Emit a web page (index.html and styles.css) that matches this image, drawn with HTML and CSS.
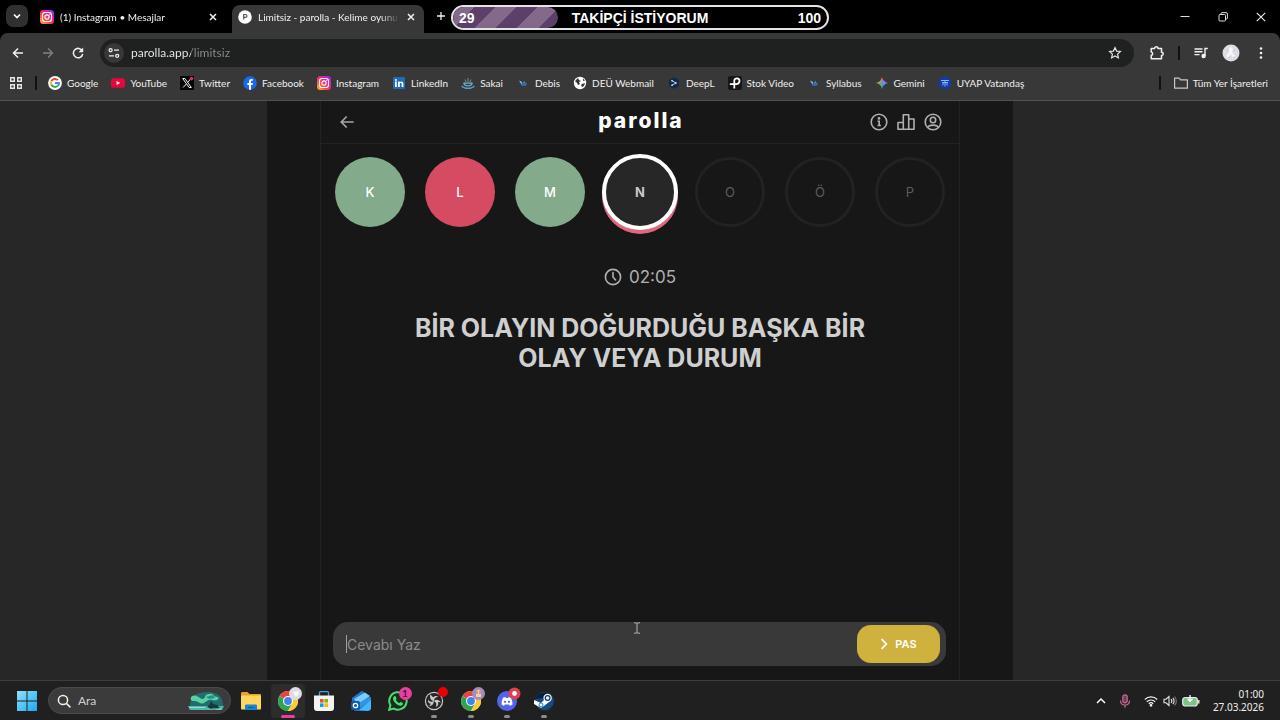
FILE: index.html
```html
<!DOCTYPE html>
<html lang="tr">
<head>
    <meta charset="UTF-8">
    <title>Limitsiz - parolla - Kelime oyunu</title>
    <link rel="stylesheet" href="styles.css">
</head>
<body>
<!-- shared icons -->
<svg class="defs" aria-hidden="true">
    <defs>
        <linearGradient id="igFill" x1="0" y1="1" x2="1" y2="0">
            <stop offset="0" stop-color="#ffc83a"/>
            <stop offset=".35" stop-color="#ff4a3d"/>
            <stop offset=".65" stop-color="#e3209a"/>
            <stop offset="1" stop-color="#8a30f0"/>
        </linearGradient>
        <linearGradient id="winFill" x1="0" y1="0" x2="1" y2="1">
            <stop offset="0" stop-color="#8be4fb"/>
            <stop offset="1" stop-color="#1ea7ee"/>
        </linearGradient>
        <symbol id="instagram" viewBox="0 0 14 14">
            <rect width="14" height="14" rx="3.5" fill="url(#igFill)"/>
            <rect x="2.5" y="2.5" width="9" height="9" rx="2.6" fill="none" stroke="#fff" stroke-width="1.1"/>
            <circle cx="7" cy="7" r="2.1" fill="none" stroke="#fff" stroke-width="1.1"/>
            <circle cx="9.7" cy="4.3" r=".6" fill="#fff"/>
        </symbol>
        <symbol id="close" viewBox="0 0 10 10">
            <path d="M2 2l6 6M8 2L2 8" stroke="#f1f1f1" stroke-width="1.5"/>
        </symbol>
        <symbol id="chrome" viewBox="0 0 20 20">
            <circle cx="10" cy="10" r="10" fill="#fff"/>
            <path d="M10 10L1.34 5A10 10 0 0 1 18.66 5z" fill="#e8453c"/>
            <path d="M1.34 5A10 10 0 0 0 10 20l4.3-7.5L10 10z" fill="#34a351"/>
            <path d="M18.66 5A10 10 0 0 1 10 20l4.3-7.5L10 5z" fill="#fccb2f"/>
            <path d="M10 5h8.66L15 8z" fill="#e8453c"/>
            <circle cx="10" cy="10" r="5" fill="#fff"/>
            <circle cx="10" cy="10" r="3.9" fill="#3f83f0"/>
        </symbol>
        <symbol id="deu" viewBox="0 0 14 14">
            <path d="M3 4.5l3.5 2.8L11 7l-1 2.8H5.5z" fill="#356fb5"/>
            <path d="M3 4.5L6 6l-.5 2z" fill="#9cc6f2"/>
            <path d="M6.5 6.8l2-1.6 1 1.6z" fill="#6fa3da"/>
        </symbol>
    </defs>
</svg>

<header class="browser">
    <div class="tab-strip">
        <button class="tab-search" aria-label="Sekmelerde ara">
            <svg width="10" height="10" viewBox="0 0 10 10"><path d="M2 3.5l3 3 3-3" fill="none" stroke="#fff" stroke-width="1.6"/></svg>
        </button>
        <div class="tab">
            <svg width="14" height="14"><use href="#instagram"/></svg>
            <span class="tab-title">(1) Instagram • Mesajlar</span>
            <button class="tab-close" aria-label="Kapat"><svg width="10" height="10"><use href="#close"/></svg></button>
        </div>
        <div class="tab active">
            <svg width="14" height="14" viewBox="0 0 14 14">
                <circle cx="7" cy="7" r="6.8" fill="#fff"/>
                <path d="M5.7 9.5v-5h1.8a1.4 1.4 0 0 1 0 2.9H5.7" fill="none" stroke="#555" stroke-width="1.2"/>
            </svg>
            <span class="tab-title">Limitsiz - parolla - Kelime oyunu</span>
            <button class="tab-close" aria-label="Kapat"><svg width="10" height="10"><use href="#close"/></svg></button>
        </div>
        <button class="new-tab" aria-label="Yeni sekme">
            <svg width="10" height="10" viewBox="0 0 10 10"><path d="M5 1v8M1 5h8" stroke="#f1f1f1" stroke-width="1.3"/></svg>
        </button>
        <div class="window-controls">
            <button aria-label="Simge durumuna küçült"><svg width="10" height="10" viewBox="0 0 10 10"><path d="M.5 4.5h9" stroke="#ddd"/></svg></button>
            <button aria-label="Önceki boyut"><svg width="10" height="10" viewBox="0 0 10 10" fill="none" stroke="#ddd"><rect x="1" y="2.5" width="6.5" height="6.5" rx="1"/><path d="M3 2.2V1.6c0-.6.4-1 1-1h4c.9 0 1.4.5 1.4 1.4V6c0 .7-.4 1-1 1h-.6"/></svg></button>
            <button aria-label="Pencereyi kapat"><svg width="10" height="10" viewBox="0 0 10 10"><path d="M.8.8l8.4 8.4M9.2.8L.8 9.2" stroke="#eee" stroke-width="1.1"/></svg></button>
        </div>
        <div class="goal">
            <div class="goal-fill" style="width: 28%"></div>
            <span class="goal-now">29</span>
            <span class="goal-title">TAKİPÇİ İSTİYORUM</span>
            <span class="goal-end">100</span>
        </div>
    </div>

    <div class="toolbar">
        <button class="tool" aria-label="Geri"><svg width="12" height="12" viewBox="0 0 12 12" fill="none" stroke="#f1f1f1" stroke-width="1.5"><path d="M11 6H1.8M6 1.5L1.5 6 6 10.5"/></svg></button>
        <button class="tool" aria-label="İleri"><svg width="12" height="12" viewBox="0 0 12 12" fill="none" stroke="#808080" stroke-width="1.3"><path d="M1 6h9.2M6 1.5L10.5 6 6 10.5"/></svg></button>
        <button class="tool" aria-label="Yenile"><svg width="12" height="12" viewBox="0 0 12 12"><path d="M10.3 4A4.7 4.7 0 1 0 10.7 7" fill="none" stroke="#f1f1f1" stroke-width="1.5"/><path d="M11.2.6v4.6H6.6z" fill="#f1f1f1"/></svg></button>
        <div class="address">
            <button class="site-info" aria-label="Site bilgileri">
                <svg width="12" height="12" viewBox="0 0 12 12" fill="none" stroke="#eee" stroke-width="1.3"><circle cx="2.6" cy="3.2" r="1.5"/><path d="M6 3.2h5M1 8.8h5"/><circle cx="9.2" cy="8.8" r="1.5"/></svg>
            </button>
            <input class="url" type="text" aria-label="Adres çubuğu" value="parolla.app/limitsiz">
            <button class="star" aria-label="Yer işareti ekle"><svg width="14" height="14" viewBox="0 0 14 14"><path d="M7 1.6l1.6 3.5 3.8.4-2.8 2.6.8 3.8L7 10l-3.4 1.9.8-3.8L1.6 5.5l3.8-.4z" fill="none" stroke="#e2e2e2" stroke-width="1.2"/></svg></button>
        </div>
        <button class="tool" aria-label="Uzantılar"><svg width="16" height="16" viewBox="0 0 16 16"><path d="M2.2 3.6h3.4c0-2.4 3.4-2.4 3.4 0h3.5v3.6c2.3 0 2.3 3.3 0 3.3v3.3H2.2v-3.5c2-.2 2-3 0-3.2z" fill="none" stroke="#f1f1f1" stroke-width="1.5" stroke-linejoin="round"/></svg></button>
        <span class="divider"></span>
        <button class="tool" aria-label="Medya"><svg width="14" height="14" viewBox="0 0 14 14" fill="none" stroke="#f1f1f1" stroke-width="1.4"><path d="M.5 3h8M.5 5.8h8M.5 8.6h5"/><path d="M11 10V2.5h2.8"/><circle cx="9.6" cy="10" r="1.5" fill="#f1f1f1"/></svg></button>
        <button class="tool" aria-label="Profil"><svg width="18" height="18" viewBox="0 0 18 18"><circle cx="9" cy="9" r="8.5" fill="#dedde6"/><path d="M7 4l2-1 2 2-1 3 3 4-3 1-1-3-3 4-2-2 3-4z" fill="#f7f6fb"/><path d="M4 6l2 1M12 5l1 2M6 14l2-2M12 14l1-1" stroke="#cbc9d6"/></svg></button>
        <button class="tool" aria-label="Menü"><svg width="12" height="14" viewBox="0 0 12 14" fill="#f1f1f1"><circle cx="6" cy="2.5" r="1.3"/><circle cx="6" cy="7" r="1.3"/><circle cx="6" cy="11.5" r="1.3"/></svg></button>
    </div>

    <nav class="bookmarks">
        <button class="apps" aria-label="Uygulamalar"><svg width="12" height="12" viewBox="0 0 12 12" fill="none" stroke="#e8e8e8" stroke-width="1.4"><path d="M.7.7h3.6v3.6H.7zM7.7.7h3.6v3.6H7.7zM.7 7.7h3.6v3.6H.7zM7.7 7.7h3.6v3.6H7.7z"/></svg></button>
        <span class="divider"></span>
        <a href="#"><svg width="14" height="14" viewBox="0 0 14 14"><circle cx="7" cy="7" r="6.9" fill="#fff"/><g fill="none" stroke-width="1.9"><path d="M9.9 4.2A4 4 0 0 0 3.4 5.2" stroke="#ea4335"/><path d="M3.4 5.2a4 4 0 0 0 0 3.6" stroke="#fbbc05"/><path d="M3.4 8.8a4 4 0 0 0 6.3 1.1" stroke="#34a853"/><path d="M9.7 9.9A4 4 0 0 0 11 7H7" stroke="#4285f4"/></g></svg>Google</a>
        <a href="#"><svg width="14" height="14" viewBox="0 0 14 14"><rect y="2.2" width="14" height="9.6" rx="2.6" fill="#e8063a"/><path d="M5.6 5v4l3.5-2z" fill="#fff"/></svg>YouTube</a>
        <a href="#"><svg width="14" height="14" viewBox="0 0 14 14"><rect width="14" height="14" fill="#060606"/><path d="M2.7 2.5h2.2l6.4 9H9.1z" fill="none" stroke="#eee"/><path d="M11 2.5L7.8 6.2M6.3 8l-3.2 3.5" stroke="#eee"/><circle cx="11.6" cy="2.6" r="1.8" fill="#e5265c"/></svg>Twitter</a>
        <a href="#"><svg width="14" height="14" viewBox="0 0 14 14"><circle cx="7" cy="7" r="6.8" fill="#1869f1"/><path d="M6 13.7V9H4.4V7H6V5.6c0-1.8 1-2.6 2.5-2.6l1.3.1v1.7H9c-.8 0-1 .4-1 1V7h1.8l-.3 2H8v4.7z" fill="#fff"/></svg>Facebook</a>
        <a href="#"><svg width="14" height="14"><use href="#instagram"/></svg>Instagram</a>
        <a href="#"><svg width="14" height="14" viewBox="0 0 14 14"><rect x="1" y="1" width="12" height="12" rx="1" fill="#1f6bb8"/><g fill="#fff"><circle cx="3.9" cy="3.9" r="1"/><path d="M3 5.6h1.8v5.4H3zM6 5.6h1.7v.8c.9-1.5 3.7-1.2 3.7 1.3V11H9.6V8c0-1.3-1.8-1.3-1.8 0v3H6z"/></g></svg>LinkedIn</a>
        <a href="#"><svg width="14" height="14" viewBox="0 0 14 14" fill="none"><path d="M5 6L4 3.5M7 6V2M9 6l1-2.5" stroke="#8a9298" stroke-width=".9"/><path d="M3 7.2c0 3.4 8 3.4 8 0z" stroke="#74b3d9" stroke-width="1.2"/><path d="M.8 9.8c2 3.3 10.4 3.3 12.4 0" stroke="#5a9dc8" stroke-width="1.4"/></svg>Sakai</a>
        <a href="#"><svg width="14" height="14"><use href="#deu"/></svg>Debis</a>
        <a href="#"><svg width="14" height="14" viewBox="0 0 14 14"><circle cx="7" cy="7" r="6.2" fill="#fff"/><path d="M2 5l3-3 1 2 2 1-2 1 1 2-2 1-1-2zM9 8l3-1-1 3-2 1-1-2zM10 2.5l2 2-2 .5z" fill="#383838"/></svg>DEÜ Webmail</a>
        <a href="#"><svg width="14" height="14" viewBox="0 0 14 14"><path d="M7 1.2l5 2.8v6L7 12.8 2 10V4z" fill="#10294a"/><path d="M5 4.8L9 7 5 9.2" fill="none" stroke="#b9cbe3"/><circle cx="5" cy="4.8" r=".8" fill="#fff"/><circle cx="9" cy="7" r=".8" fill="#fff"/><circle cx="5" cy="9.2" r=".8" fill="#fff"/></svg>DeepL</a>
        <a href="#"><svg width="14" height="14" viewBox="0 0 14 14"><rect width="14" height="14" rx="2" fill="#161616"/><path d="M6.3 12.5V4.500c0-2.800 5.200-2.800 5.200.4 0 2.600-2.500 3.300-5.200 3.300H1.800" fill="none" stroke="#fff" stroke-width="1.8"/></svg>Stok Video</a>
        <a href="#"><svg width="14" height="14"><use href="#deu"/></svg>Syllabus</a>
        <a href="#"><svg width="14" height="14" viewBox="0 0 14 14"><path d="M7 .8Q7.8 6.2 13.2 7L7 7z" fill="#e5576a"/><path d="M7 .8Q6.2 6.2.8 7L7 7z" fill="#f08b45"/><path d="M.8 7Q6.2 7.8 7 13.2L7 7z" fill="#55b76a"/><path d="M13.2 7Q7.8 7.8 7 13.2L7 7z" fill="#4b8df0"/><circle cx="8" cy="7" r="2.4" fill="#5b92ea"/></svg>Gemini</a>
        <a href="#"><svg width="14" height="14" viewBox="0 0 14 14"><circle cx="7" cy="7" r="6.3" fill="#1639a8"/><path d="M3 4.5h8M4 6.5h6M7 4v6.5M5 7v2.5M9 7v2.5" stroke="#86b4ee"/></svg>UYAP Vatandaş</a>
        <span class="divider right"></span>
        <a href="#"><svg width="14" height="14" viewBox="0 0 14 14"><path d="M.6 2.2h4.6l1.4 1.6h6.8v8.4H.6z" fill="none" stroke="#c8c8c8" stroke-width="1.2" stroke-linejoin="round"/></svg>Tüm Yer İşaretleri</a>
    </nav>
</header>

<main class="page">
    <div class="site">
        <div class="game">
            <div class="game-header">
                <a class="back" href="#" aria-label="Geri dön"><svg width="14" height="14" viewBox="0 0 14 14" fill="none" stroke="#a8a8a8" stroke-width="1.7" stroke-linecap="round" stroke-linejoin="round"><path d="M13 7H1.2M6.2 2L1.2 7l5 5"/></svg></a>
                <h1>parolla</h1>
                <div class="header-actions">
                    <button aria-label="Bilgi"><svg width="18" height="18" viewBox="0 0 18 18" fill="none" stroke="#b0b0b0" stroke-width="1.6"><circle cx="9" cy="9" r="7.8"/><path d="M7.5 8.2H9.2V12.5M7.5 12.5h3.4"/><circle cx="9" cy="5.4" r=".6"/></svg></button>
                    <button aria-label="İstatistik"><svg width="18" height="18" viewBox="0 0 18 18" fill="none" stroke="#b0b0b0" stroke-width="1.6" stroke-linejoin="round"><path d="M1 9.5h5.3v6.7H1zM6.3 1.8h5.4v14.4H6.3zM11.7 6h5.3v10.2h-5.3z"/></svg></button>
                    <button aria-label="Hesap"><svg width="18" height="18" viewBox="0 0 18 18" fill="none" stroke="#b0b0b0" stroke-width="1.6"><circle cx="9" cy="9" r="7.8"/><circle cx="9" cy="7" r="2.7"/><path d="M3.8 14.5c1-3.2 9.4-3.2 10.4 0"/></svg></button>
                </div>
            </div>

            <ol class="letters">
                <li class="correct">K</li>
                <li class="wrong">L</li>
                <li class="correct">M</li>
                <li class="current">N</li>
                <li>O</li>
                <li>Ö</li>
                <li>P</li>
            </ol>

            <div class="timer">
                <svg width="18" height="18" viewBox="0 0 18 18" fill="none" stroke="#b0b0b0" stroke-width="1.6"><circle cx="9" cy="9" r="7.6"/><path d="M9 4.5V9l2.6 3" stroke-linecap="round"/></svg>
                <span>02:05</span>
            </div>

            <h2 class="question">BİR OLAYIN DOĞURDUĞU BAŞKA BİR OLAY VEYA DURUM</h2>

            <form class="answer">
                <span class="caret"></span>
                <input type="text" placeholder="Cevabı Yaz" aria-label="Cevabı Yaz">
                <button type="button" class="pass">
                    <svg width="8" height="12" viewBox="0 0 8 12"><path d="M1.5 1.2L6.4 6l-4.9 4.8" fill="none" stroke="#fff" stroke-width="1.7"/></svg>
                    PAS
                </button>
                <svg class="pointer" width="8" height="12" viewBox="0 0 8 12" fill="none" stroke="#b5b5b5"><path d="M1 .8h2l1 .7 1-.7h2M4 1.5v9M1 11.2h2l1-.7 1 .7h2"/></svg>
            </form>
        </div>
    </div>
</main>

<footer class="taskbar">
    <button class="start" aria-label="Başlat"><svg width="20" height="20" viewBox="0 0 20 20" fill="url(#winFill)"><path d="M0 0h9.5v9.5H0zM10.5 0H20v9.5h-9.5zM0 10.5h9.5V20H0zM10.5 10.5H20V20h-9.5z"/></svg></button>
    <label class="search">
        <svg width="14" height="14" viewBox="0 0 14 14" fill="none" stroke="#f1f1f1" stroke-width="1.5"><circle cx="6" cy="6" r="4.6"/><path d="M9.4 9.4l4 4"/></svg>
        <input type="text" placeholder="Ara" aria-label="Ara">
        <svg width="36" height="20" viewBox="0 0 36 20">
            <path d="M2 15C2 4 10 1 20 1s15 5 15 14z" fill="#226b70"/>
            <path d="M3 6c5-4 7 1 12 2 3-1 1-5 6-5 6-1 3 3 9 3 2 3-3 4-6 3s-5 1-8 3-6-2-9-2-5 0-4-4z" fill="#55d3a0"/>
            <path d="M18 6l7-2 2 3-6 1z" fill="#2d8c8b"/>
            <path d="M0 15h36l-2 4H2z" fill="#50b8aa"/>
            <path d="M19 16l3-3 1-3 2 3 4 1 3 3-6 2z" fill="#123b3c"/>
            <path d="M1 16.5h16M24 18h9" stroke="#9ae0c8"/>
        </svg>
    </label>
    <div class="apps-row">
        <button aria-label="Dosya Gezgini"><svg width="22" height="20" viewBox="0 0 22 20"><path d="M1 2.5c0-1 .5-1.5 1.5-1.5h5l2 2H20c.8 0 1 .4 1 1V17H1z" fill="#e3a62a"/><rect x="1" y="4.5" width="20" height="14" rx="1" fill="#ffd75e"/><path d="M5 19v-4c0-1 .5-1.5 1.5-1.5h9c1 0 1.5.5 1.5 1.5v4z" fill="#1685d0"/><path d="M8 16.5h6" stroke="#0e5c9c"/></svg></button>
        <button class="open focused" aria-label="Chrome">
            <svg width="20" height="20"><use href="#chrome"/></svg>
            <svg class="badge" width="13" height="13" viewBox="0 0 13 13"><circle cx="6.5" cy="6.5" r="6.5" fill="#dcdce0"/><path d="M4 4l3 1 2-2 1 4-3 3-2-2z" fill="#f6f6f8"/></svg>
        </button>
        <button aria-label="Microsoft Store"><svg width="20" height="20" viewBox="0 0 20 20"><path d="M5.5 5V1.8C5.5 1 6 .7 6.5.7h7c.6 0 1 .4 1 1.1V5" fill="none" stroke="#3ba5df" stroke-width="1.3"/><path d="M0 4.5h20V17c0 2-1 3-3 3H3c-2 0-3-1-3-3z" fill="#f3f3f3"/><path d="M6 8h3.6v3.6H6z" fill="#f25022"/><path d="M10.4 8H14v3.6h-3.6z" fill="#7fba00"/><path d="M6 12.4h3.6V16H6z" fill="#00a4ef"/><path d="M10.4 12.4H14V16h-3.6z" fill="#ffb900"/></svg></button>
        <button aria-label="Outlook"><svg width="20" height="20" viewBox="0 0 20 20"><path d="M1 7l9-6.5c1-.6 1.5-.4 2 0L20 7v10c0 2-1 3-3 3H6c-3 0-5-2-5-4z" fill="#2478d4"/><path d="M3 8l11-6.5L19 5 7 13z" fill="#79cff9"/><path d="M6 13L19.5 6v4L8 17z" fill="#2b96ea"/><path d="M8 19L20 9v9l-3 2z" fill="#47b6f5"/><rect y="10" width="9" height="9" rx="2" fill="#1257b0"/><circle cx="4.5" cy="14.5" r="2.2" fill="none" stroke="#fff" stroke-width="1.3"/></svg></button>
        <button aria-label="WhatsApp">
            <svg width="20" height="20" viewBox="0 0 20 20"><path d="M1.2 18.8l1.2-4.6a8.7 8.7 0 1 1 3.5 3.4z" fill="#1b2b20" stroke="#4bdc6f" stroke-width="2"/><path d="M6 5.5c1.5-1.5 2.3.8 2.5 2 0 .6-.8 1-.6 1.5.8 1.6 2 2.4 3.2 3 .5.2 1-.9 1.6-1 1 .2 2.4 1 2.3 1.5-.3 2.3-2.8 2.6-4.7 1.7C8 13 6.3 11.5 5.3 9c-.5-1.3-.3-2.6.7-3.5z" fill="#4bdc6f"/></svg>
            <span class="badge count">1</span>
        </button>
        <button class="open" aria-label="OBS Studio">
            <svg width="20" height="20" viewBox="0 0 20 20"><circle cx="10" cy="10" r="9.2" fill="#c8c8c8"/><circle cx="10" cy="10" r="8" fill="#252525"/><path d="M6.5 3.2c-1.2 3.5 0 6.3 3.4 6.8.3-2.7 2.1-4.3 4.5-4-1.5-1.5-3.600-1.500-5 .3C8.200 5.700 7.500 4.600 6.500 3.200zM17 11.500c-2.200-3.200-5.400-3.400-7.100-1.500 2.500 1.400 3.300 3.500 1.800 5.700 2.200-.2 3.200-2 2.300-4.200 1-.7 1.900-.6 3 0zM4.200 15c3.500.3 5.700-1.600 5.700-5-2.600 1.400-4.700.7-5.700-1.500-.8 2 .3 3.900 2.500 4.200-.3 1.200-1 1.900-2.500 2.300z" fill="#c8c8c8"/></svg>
            <span class="badge dot"></span>
        </button>
        <button class="open" aria-label="Chrome profil 2">
            <svg width="20" height="20"><use href="#chrome"/></svg>
            <svg class="badge" width="13" height="13" viewBox="0 0 13 13"><circle cx="6.5" cy="6.5" r="6.5" fill="#a78bbd"/><path d="M4 10V4l2.5-1.5L9 4v6z" fill="#f0cfae"/><path d="M5 4v3M8 4v3" stroke="#b2625e"/></svg>
        </button>
        <button class="open" aria-label="Discord">
            <svg width="20" height="20" viewBox="0 0 20 20"><circle cx="10" cy="10" r="10" fill="#5562ea"/><path d="M4.5 13.5c0-3 .7-5.3 1.7-7L8.5 6l.5 1h2l.5-1 2.3.5c1 1.7 1.7 4 1.7 7L13 15l-.8-1.500H7.800L7 15z" fill="#fff"/><circle cx="8" cy="10.800" r="1.100" fill="#5562ea"/><circle cx="12" cy="10.800" r="1.100" fill="#5562ea"/></svg>
            <svg class="badge" width="13" height="13" viewBox="0 0 13 13"><circle cx="6.5" cy="6.5" r="6" fill="#dd414d"/><circle cx="6.5" cy="6.5" r="2.4" fill="#fff"/></svg>
        </button>
        <button class="open" aria-label="Steam"><svg width="20" height="20" viewBox="0 0 20 20"><circle cx="10.5" cy="10" r="9.3" fill="#154c7f"/><path d="M1.5 8a9.3 9.3 0 0 1 17-2z" fill="#0b1f3d"/><path d="M0 9l7 3 4-4 4 3-5 4-3 2-7-4z" fill="#fff"/><circle cx="13.6" cy="7" r="4.2" fill="#fff"/><circle cx="13.6" cy="7" r="2.4" fill="#e8f1f8" stroke="#17375c" stroke-width="1.2"/><circle cx="7" cy="14" r="2" fill="none" stroke="#2e73a6"/></svg></button>
    </div>
    <div class="tray">
        <button aria-label="Gizli simgeler"><svg width="10" height="10" viewBox="0 0 10 10"><path d="M1 7l4-4 4 4" fill="none" stroke="#fff" stroke-width="1.5"/></svg></button>
        <button aria-label="Mikrofon"><svg width="12" height="14" viewBox="0 0 12 14" fill="none" stroke="#c56b92" stroke-width="1.2"><rect x="3.8" y=".8" width="4.4" height="8" rx="2.2" fill="#713b55"/><path d="M1.5 6.5c0 6 9 6 9 0M6 11v2.8"/></svg></button>
        <div class="status">
            <svg width="14" height="12" viewBox="0 0 14 12" fill="none" stroke="#f1f1f1" stroke-width="1.2"><path d="M.8 4.5a8.8 8.8 0 0 1 12.4 0M2.8 6.7a6 6 0 0 1 8.4 0M4.8 8.7a3.2 3.2 0 0 1 4.4 0"/><circle cx="7" cy="10.3" r=".8" fill="#fff"/></svg>
            <svg width="14" height="12" viewBox="0 0 14 12" fill="none" stroke="#e5e5e5" stroke-width="1.1"><path d="M1 4.2h2L6 1.5v9L3 7.8H1zM8 4.2c1 1 1 2.6 0 3.6M9.8 2.8c1.7 1.7 1.7 4.7 0 6.4"/><path d="M11.6 1.5c2.3 2.5 2.3 6.5 0 9" stroke="#777"/></svg>
            <svg width="18" height="12" viewBox="0 0 18 12"><rect x=".7" y="2.5" width="14.6" height="8.5" rx="2.5" fill="#7dc387" stroke="#e3f3e5" stroke-width="1.2"/><path d="M16.8 5v3.5" stroke="#ddd" stroke-width="1.5"/><path d="M8 0v5.5M5.5 3.8L8 6.5l2.5-2.7" stroke="#fff" stroke-width="1.3" fill="none"/></svg>
        </div>
        <div class="clock"><time>01:00</time><time>27.03.2026</time></div>
    </div>
</footer>
</body>
</html>
```
FILE: styles.css
```css
* { box-sizing: border-box; }
body {
    margin: 0;
    min-height: 100vh;
    display: flex;
    flex-direction: column;
    background: #272727;
    color: #f0f0f0;
    font-family: Lato, "Open Sans", sans-serif;
    font-size: 10px;
}
button {
    display: flex;
    align-items: center;
    justify-content: center;
    padding: 0;
    border: 0;
    background: none;
    color: inherit;
    font: inherit;
}
input {
    min-width: 0;
    padding: 0;
    border: 0;
    outline: 0;
    background: none;
    color: inherit;
    font: inherit;
}
a { color: inherit; text-decoration: none; }
svg { flex: none; display: block; }
.defs { position: absolute; width: 0; height: 0; }

/* browser */
.browser { background: #000; }
.tab-strip {
    position: relative;
    display: flex;
    align-items: flex-end;
    gap: 6px;
    height: 33px;
    padding-left: 6px;
}
.tab-search {
    width: 22px;
    height: 22px;
    margin-bottom: 6px;
    border-radius: 7px;
    background: #303030;
}
.tab {
    display: flex;
    align-items: center;
    gap: 6px;
    width: 192px;
    height: 28px;
    padding: 0 8px 5px 6px;
    border-radius: 8px 8px 0 0;
}
.tab.active { background: #383838; }
.tab-title {
    flex: 1;
    overflow: hidden;
    white-space: nowrap;
    mask-image: linear-gradient(to right, #000 86%, transparent);
}
.tab-close { width: 10px; height: 16px; }
.new-tab { width: 22px; height: 22px; margin-bottom: 6px; }
.window-controls {
    display: flex;
    margin-left: auto;
    height: 33px;
}
.window-controls button { width: 38px; }

/* follower goal */
.goal {
    position: absolute;
    top: 5px;
    left: 50%;
    transform: translateX(-50%);
    display: grid;
    grid-template-columns: 1fr auto 1fr;
    align-items: center;
    width: 378px;
    height: 25px;
    padding: 0 6px;
    border: 2px solid #e4e4e4;
    border-radius: 13px;
    background: #000;
    overflow: hidden;
    color: #fff;
    font: bold 14px "Liberation Sans", Arial, sans-serif;
}
.goal-fill {
    position: absolute;
    left: 0;
    top: 0;
    height: 100%;
    border-radius: 11px;
    background: repeating-linear-gradient(135deg, #85698a 0 15px, #5d4069 15px 30px);
}
.goal span { position: relative; }
.goal-end { text-align: right; }

/* toolbar */
.toolbar {
    display: flex;
    align-items: center;
    height: 39px;
    padding: 0 4px 0 3px;
    border-radius: 8px 8px 0 0;
    background: #383838;
}
.tool { width: 30px; height: 28px; }
.address {
    flex: 1;
    display: flex;
    align-items: center;
    height: 28px;
    margin: 0 8px 0 7px;
    padding: 0 12px 0 4px;
    border-radius: 14px;
    background: #1f2121;
}
.site-info {
    width: 20px;
    height: 20px;
    margin-right: 7px;
    border-radius: 10px;
    background: #383838;
}
.url {
    flex: 1;
    height: 20px;
    font-size: 12px;
    color: transparent;
    background: linear-gradient(to right, #f0f0f0 60px, #8b8b8b 60px);
    background-clip: text;
    -webkit-background-clip: text;
}
.divider {
    flex: none;
    width: 2px;
    height: 14px;
    margin: 0 6px;
    background: #111;
}

/* bookmarks */
.bookmarks {
    display: flex;
    align-items: center;
    gap: 13px;
    height: 29px;
    padding: 0 12px 7px 10px;
    border-bottom: 1px solid #505050;
    background: #383838;
    white-space: nowrap;
}
.bookmarks a {
    display: flex;
    align-items: center;
    gap: 5px;
}
.bookmarks .divider { margin: 0 -2px 0 0; }
.bookmarks .right { margin: 0 0 0 auto; }

/* page */
.page {
    flex: 1;
    display: flex;
    justify-content: center;
}
.site {
    display: flex;
    justify-content: center;
    width: 100%;
    max-width: 746px;
    background: #171717;
}
.game {
    display: flex;
    flex-direction: column;
    width: 100%;
    max-width: 640px;
    border: solid #222;
    border-width: 0 1px;
    color: #b0b0b0;
    font-family: Inter, Roboto, sans-serif;
}
.game-header {
    display: grid;
    grid-template-columns: 1fr auto 1fr;
    align-items: center;
    height: 43px;
    padding: 0 17px 0 19px;
    border-bottom: 1px solid #222;
}
.game-header h1 {
    margin: 0;
    padding-bottom: 4px;
    color: #fff;
    font-size: 21px;
    font-weight: 800;
    letter-spacing: 2px;
}
.header-actions {
    display: flex;
    justify-content: flex-end;
    gap: 9px;
}
.letters {
    display: flex;
    align-items: center;
    justify-content: center;
    gap: 20px;
    height: 76px;
    margin: 10px 0 0;
    padding: 0;
    list-style: none;
}
.letters li {
    display: flex;
    align-items: center;
    justify-content: center;
    width: 70px;
    height: 70px;
    border: 3px solid #222;
    border-radius: 50%;
    color: #5c5c5c;
    font-size: 13px;
}
.letters .correct,
.letters .wrong {
    border: 0;
    color: #fff;
    font-weight: 500;
}
.letters .correct { background: #82aa8b; }
.letters .wrong { background: #d54b61; }
.letters .current {
    width: 76px;
    height: 76px;
    margin: 0 -3px;
    border: 4px solid #fff;
    background: #272727;
    box-shadow: 0 4px 0 #e2677e;
    color: #c8c8c8;
    font-weight: 700;
}
.timer {
    display: flex;
    align-items: center;
    justify-content: center;
    gap: 7px;
    height: 20px;
    margin-top: 37px;
    font-size: 17px;
}
.question {
    max-width: 500px;
    margin: 26px auto 0;
    color: #cfcfcf;
    font-size: 25px;
    line-height: 30px;
    text-align: center;
}
.answer {
    position: relative;
    display: flex;
    align-items: center;
    height: 44px;
    margin: auto 13px 14px 12px;
    padding: 0 6px 0 13px;
    border-radius: 15px;
    background: #393939;
}
.caret {
    width: 1px;
    height: 18px;
    background: #a0a0a0;
}
.answer input {
    flex: 1;
    height: 40px;
    font-size: 14px;
}
.answer input::placeholder { color: #8b8b8b; }
.pass {
    gap: 7px;
    width: 83px;
    height: 38px;
    border-radius: 14px;
    background: #cfb13e;
    color: #fff;
    font-size: 11px;
    font-weight: 600;
}
.pointer {
    position: absolute;
    left: 49%;
    top: 0;
}

/* taskbar */
.taskbar {
    display: flex;
    align-items: center;
    height: 40px;
    padding: 0 16px;
    border-top: 1px solid #3d3d3d;
    background: #202020;
}
.start { width: 22px; height: 30px; }
.search {
    display: flex;
    align-items: center;
    gap: 7px;
    width: 183px;
    height: 27px;
    margin: 0 3px 0 10px;
    padding: 0 6px 0 8px;
    border: 1px solid #4b4b4b;
    border-radius: 14px;
    background: #3b3b3b;
}
.search input { flex: 1; font-size: 12px; }
.search input::placeholder { color: #d0d0d0; }
.apps-row {
    display: flex;
    justify-content: space-between;
    width: 327px;
}
.apps-row button {
    position: relative;
    width: 34px;
    height: 34px;
    border-radius: 4px;
}
.apps-row .focused { background: #2c2c2c; }
.apps-row .open::after {
    content: "";
    position: absolute;
    bottom: 0;
    left: 50%;
    width: 6px;
    height: 3px;
    margin-left: -3px;
    border-radius: 2px;
    background: #8c8c8c;
}
.apps-row .focused::after {
    width: 14px;
    margin-left: -7px;
    background: #e5409f;
}
.badge {
    position: absolute;
    top: 3px;
    right: 3px;
}
.count {
    width: 13px;
    height: 13px;
    border-radius: 50%;
    background: #e83e9f;
    color: #111;
    font-size: 10px;
    line-height: 13px;
}
.dot {
    width: 10px;
    height: 10px;
    border-radius: 50%;
    background: #e60000;
}
.tray {
    display: flex;
    align-items: center;
    gap: 13px;
    margin-left: auto;
}
.status {
    display: flex;
    align-items: center;
    gap: 5px;
}
.clock {
    display: flex;
    flex-direction: column;
    font-family: "Noto Sans", sans-serif;
    font-size: 10px;
    line-height: 13px;
    text-align: right;
    color: #f1f1f1;
}
```
